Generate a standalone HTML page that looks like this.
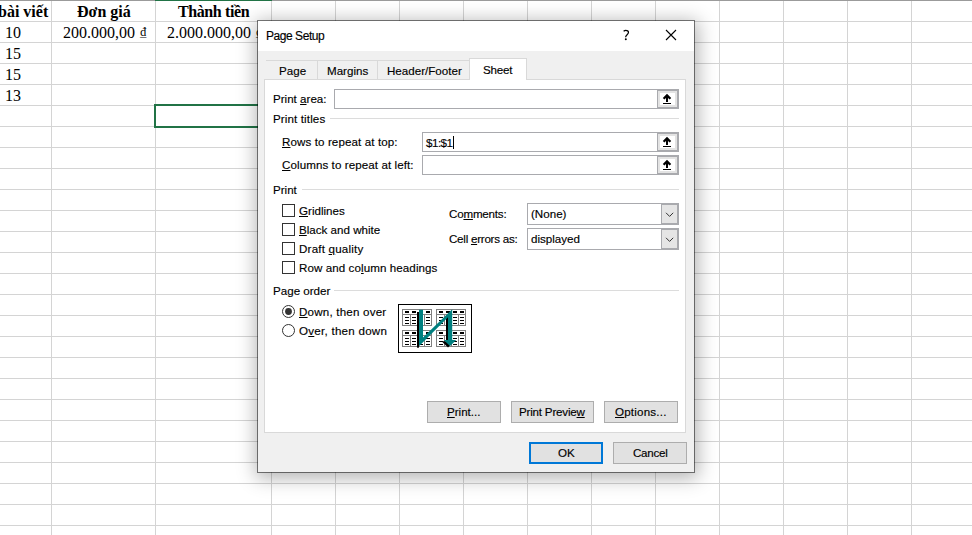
<!DOCTYPE html>
<html><head><meta charset="utf-8">
<style>
*{margin:0;padding:0;box-sizing:border-box}
html,body{width:972px;height:535px;overflow:hidden;background:#fff;position:relative}
.a{position:absolute}
.hl{position:absolute;left:0;width:972px;height:1px;background:#d4d4d4}
.vl{position:absolute;top:0;height:535px;width:1px;background:#d4d4d4}
.xs{font-family:"Liberation Serif",serif;font-size:16px;color:#000;position:absolute;white-space:nowrap;line-height:16px}
.xb{font-weight:bold}
#dlg{position:absolute;left:257px;top:20px;width:438px;height:453px;background:#f0f0f0;background-clip:padding-box;border:1px solid rgba(0,0,0,.5);box-shadow:1px 3px 18px 2px rgba(0,0,0,.30)}
.t{position:absolute;font-family:"Liberation Sans",sans-serif;font-size:11.6px;line-height:12px;color:#000;white-space:nowrap;-webkit-text-stroke:0.15px #000}
.u{text-decoration:underline;text-underline-offset:1px}
.sep{position:absolute;height:1px;background:#dcdcdc}
.box{position:absolute;background:#fff;border:1px solid #a9aaae}
.btn{position:absolute;background:#e1e1e1;border:1px solid #adadad}
.cb{position:absolute;width:13px;height:13px;border:1px solid #333;background:#fff}
</style></head><body>
<!-- grid -->
<div class="a" style="left:0;top:0;width:972px;height:1px;background:#9b9b9b"></div>
<div class="a" style="left:155px;top:0;width:117px;height:1px;background:#217346"></div>
<div class="hl" style="top:21px"></div><div class="hl" style="top:42px"></div><div class="hl" style="top:63px"></div>
<div class="hl" style="top:84px"></div><div class="hl" style="top:105px"></div><div class="hl" style="top:126px"></div>
<div class="hl" style="top:147px"></div><div class="hl" style="top:168px"></div><div class="hl" style="top:189px"></div>
<div class="hl" style="top:210px"></div><div class="hl" style="top:231px"></div><div class="hl" style="top:252px"></div>
<div class="hl" style="top:273px"></div><div class="hl" style="top:294px"></div><div class="hl" style="top:315px"></div>
<div class="hl" style="top:336px"></div><div class="hl" style="top:357px"></div><div class="hl" style="top:378px"></div>
<div class="hl" style="top:399px"></div><div class="hl" style="top:420px"></div><div class="hl" style="top:441px"></div>
<div class="hl" style="top:462px"></div><div class="hl" style="top:483px"></div><div class="hl" style="top:504px"></div>
<div class="hl" style="top:525px"></div>
<div class="vl" style="left:51px;top:1px"></div><div class="vl" style="left:155px;top:1px"></div><div class="vl" style="left:271px;top:1px"></div>
<div class="vl" style="left:335px;top:1px"></div><div class="vl" style="left:399px;top:1px"></div><div class="vl" style="left:463px;top:1px"></div>
<div class="vl" style="left:527px;top:1px"></div><div class="vl" style="left:591px;top:1px"></div><div class="vl" style="left:655px;top:1px"></div>
<div class="vl" style="left:719px;top:1px"></div><div class="vl" style="left:783px;top:1px"></div><div class="vl" style="left:847px;top:1px"></div>
<div class="vl" style="left:911px;top:1px"></div>
<!-- cell text -->
<div class="xs xb" style="left:-2px;top:4px">bài viết</div>
<div class="xs xb" style="left:77px;top:4px">Đơn giá</div>
<div class="xs xb" style="left:178px;top:4px;letter-spacing:-0.4px">Thành tiền</div>
<div class="xs" style="left:5px;top:25px">10</div>
<div class="xs" style="left:63px;top:25px">200.000,00 <span style="font-size:12.5px;position:relative;top:-2px;margin-left:1px">₫</span></div>
<div class="xs" style="left:167px;top:25px">2.000.000,00 <span style="font-size:12.5px;position:relative;top:-2px;margin-left:1px">₫</span></div>
<div class="xs" style="left:5px;top:46px">15</div>
<div class="xs" style="left:5px;top:67px">15</div>
<div class="xs" style="left:5px;top:88px">13</div>
<div class="a" style="left:154px;top:104px;width:120px;height:24px;border:2px solid #217346"></div>

<!-- dialog -->

<div id="dlg"></div>
<div class="a" style="left:258px;top:21px;width:436px;height:30px;background:#fff"></div>
<div class="t" style="left:266px;top:30px;font-size:12px;letter-spacing:-0.45px">Page Setup</div>
<svg class="a" style="left:618px;top:26px" width="16" height="16"><path d="M5.6 5.3C6.6 4.4 8.6 4.2 9.7 4.9C10.9 5.7 10.6 7.3 9.3 8.4C8.2 9.3 7.6 9.9 7.6 11.3" fill="none" stroke="#000" stroke-width="1.25"/><circle cx="7.8" cy="13.3" r="1" fill="#000"/></svg>
<svg class="a" style="left:665px;top:29px" width="12" height="12"><path d="M1 1L11 11M11 1L1 11" stroke="#000" stroke-width="1.1"/></svg>

<!-- tabs -->
<div class="a" style="left:266px;top:60px;width:204px;height:20px;border-top:1px solid #d9d9d9;background:#f0f0f0"></div>
<div class="a" style="left:317px;top:60px;width:1px;height:19px;background:#d9d9d9"></div>
<div class="a" style="left:377px;top:60px;width:1px;height:19px;background:#d9d9d9"></div>
<div class="a" style="left:264px;top:79px;width:422px;height:354px;background:#fff;border:1px solid #d9d9d9"></div>
<div class="a" style="left:469px;top:58px;width:58px;height:22px;background:#fff;border:1px solid #d9d9d9;border-bottom:none"></div>
<div class="t" style="left:279px;top:65px">Page</div>
<div class="t" style="left:327px;top:65px">Margins</div>
<div class="t" style="left:387px;top:65px">Header/Footer</div>
<div class="t" style="left:483px;top:64px;letter-spacing:-0.2px">Sheet</div>

<!-- print area -->
<div class="t" style="left:273px;top:93px">Print <span class="u">a</span>rea:</div>
<div class="box" style="left:334px;top:89px;width:345px;height:20px"></div>
<div class="t" style="left:273px;top:113px;letter-spacing:0.12px">Print titles</div>
<div class="sep" style="left:330px;top:118px;width:349px"></div>
<div class="t" style="left:282px;top:136px;letter-spacing:0.1px"><span class="u">R</span>ows to repeat at top:</div>
<div class="box" style="left:422px;top:132px;width:257px;height:20px"></div>
<div class="t" style="left:426px;top:137px;letter-spacing:-0.5px">$1:$1</div><div class="a" style="left:453px;top:136px;width:1px;height:13px;background:#000"></div>
<div class="t" style="left:282px;top:159px;letter-spacing:0.08px"><span class="u">C</span>olumns to repeat at left:</div>
<div class="box" style="left:422px;top:155px;width:257px;height:20px"></div>

<div class="a" style="left:657px;top:89px;width:22px;height:20px;border:2px solid #a9aaae;border-left-width:1px;background:#fff"><div class="a" style="left:0;top:0;width:19px;height:16px;border:2px solid #e3e3e3"></div>
<svg class="a" style="left:0;top:0" width="18" height="16"><path d="M9 2.8L13.2 7L11.6 8.6L10 7L10 10.9L8 10.9L8 7L6.4 8.6L4.8 7Z" fill="#000"/><rect x="5" y="12" width="8" height="1" fill="#000"/></svg></div>
<div class="a" style="left:657px;top:132px;width:22px;height:20px;border:2px solid #a9aaae;border-left-width:1px;background:#fff"><div class="a" style="left:0;top:0;width:19px;height:16px;border:2px solid #e3e3e3"></div>
<svg class="a" style="left:0;top:0" width="18" height="16"><path d="M9 2.8L13.2 7L11.6 8.6L10 7L10 10.9L8 10.9L8 7L6.4 8.6L4.8 7Z" fill="#000"/><rect x="5" y="12" width="8" height="1" fill="#000"/></svg></div>
<div class="a" style="left:657px;top:155px;width:22px;height:20px;border:2px solid #a9aaae;border-left-width:1px;background:#fff"><div class="a" style="left:0;top:0;width:19px;height:16px;border:2px solid #e3e3e3"></div>
<svg class="a" style="left:0;top:0" width="18" height="16"><path d="M9 2.8L13.2 7L11.6 8.6L10 7L10 10.9L8 10.9L8 7L6.4 8.6L4.8 7Z" fill="#000"/><rect x="5" y="12" width="8" height="1" fill="#000"/></svg></div>
<!-- print group -->
<div class="t" style="left:273px;top:184px">Print</div>
<div class="sep" style="left:302px;top:189px;width:377px"></div>
<div class="cb" style="left:282px;top:204px"></div>
<div class="cb" style="left:282px;top:223px"></div>
<div class="cb" style="left:282px;top:242px"></div>
<div class="cb" style="left:282px;top:261px"></div>
<div class="t" style="left:299px;top:205px"><span class="u">G</span>ridlines</div>
<div class="t" style="left:299px;top:224px"><span class="u">B</span>lack and white</div>
<div class="t" style="left:299px;top:243px;letter-spacing:0.2px">Draft <span class="u">q</span>uality</div>
<div class="t" style="left:299px;top:262px;letter-spacing:0.08px">Row and co<span class="u">l</span>umn headings</div>
<div class="t" style="left:449px;top:208px;letter-spacing:-0.2px">Co<span class="u">m</span>ments:</div>
<div class="t" style="left:449px;top:233px;letter-spacing:-0.25px">Cell <span class="u">e</span>rrors as:</div>
<div class="box" style="left:527px;top:203px;width:152px;height:22px"></div>
<div class="t" style="left:531px;top:208px">(None)</div>
<div class="box" style="left:527px;top:228px;width:152px;height:22px"></div>
<div class="t" style="left:531px;top:233px">displayed</div>

<div class="a" style="left:661px;top:203px;width:18px;height:22px;border:2px solid #a9aaae;border-left-width:1px;background:#e5e5e5">
<svg class="a" style="left:3px;top:7px" width="10" height="6"><path d="M1 0.8L4.6 4.4L8.2 0.8" fill="none" stroke="#333" stroke-width="1"/></svg></div>
<div class="a" style="left:661px;top:228px;width:18px;height:22px;border:2px solid #a9aaae;border-left-width:1px;background:#e5e5e5">
<svg class="a" style="left:3px;top:7px" width="10" height="6"><path d="M1 0.8L4.6 4.4L8.2 0.8" fill="none" stroke="#333" stroke-width="1"/></svg></div>
<!-- page order -->
<div class="t" style="left:273px;top:285px">Page order</div>
<div class="sep" style="left:334px;top:290px;width:345px"></div>
<div class="t" style="left:299px;top:306px;letter-spacing:0.2px"><span class="u">D</span>own, then over</div>
<div class="t" style="left:299px;top:325px;letter-spacing:0.25px">O<span class="u">v</span>er, then down</div>

<svg class="a" style="left:282px;top:304px" width="14" height="34">
<circle cx="6.5" cy="7.5" r="6" fill="#fff" stroke="#333" stroke-width="1"/>
<circle cx="6.5" cy="7.5" r="3.4" fill="#333"/>
<circle cx="6.5" cy="26.5" r="6" fill="#fff" stroke="#333" stroke-width="1"/>
</svg>
<svg class="a" style="left:398px;top:304px" width="75" height="50" shape-rendering="crispEdges">
<rect x="0.5" y="0.5" width="73" height="48" fill="#fff" stroke="#000" stroke-width="1"/>
<rect x="4.5" y="5.5" width="29" height="16" fill="#fff" stroke="#808080" stroke-width="1"/>
<rect x="4" y="10" width="30" height="1" fill="#808080"/>
<rect x="12" y="10" width="1" height="12" fill="#808080"/>
<rect x="19" y="10" width="1" height="12" fill="#808080"/>
<rect x="26" y="10" width="1" height="12" fill="#808080"/>
<rect x="7" y="7" width="4" height="2" fill="#000"/>
<rect x="7" y="13" width="4" height="1" fill="#000"/>
<rect x="7" y="16" width="4" height="1" fill="#000"/>
<rect x="7" y="19" width="4" height="1" fill="#000"/>
<rect x="14" y="7" width="4" height="2" fill="#000"/>
<rect x="14" y="13" width="4" height="1" fill="#000"/>
<rect x="14" y="16" width="4" height="1" fill="#000"/>
<rect x="14" y="19" width="4" height="1" fill="#000"/>
<rect x="21" y="7" width="4" height="2" fill="#000"/>
<rect x="21" y="13" width="4" height="1" fill="#000"/>
<rect x="21" y="16" width="4" height="1" fill="#000"/>
<rect x="21" y="19" width="4" height="1" fill="#000"/>
<rect x="28" y="7" width="4" height="2" fill="#000"/>
<rect x="28" y="13" width="4" height="1" fill="#000"/>
<rect x="28" y="16" width="4" height="1" fill="#000"/>
<rect x="28" y="19" width="4" height="1" fill="#000"/>
<rect x="38.5" y="5.5" width="29" height="16" fill="#fff" stroke="#808080" stroke-width="1"/>
<rect x="38" y="10" width="30" height="1" fill="#808080"/>
<rect x="46" y="10" width="1" height="12" fill="#808080"/>
<rect x="53" y="10" width="1" height="12" fill="#808080"/>
<rect x="60" y="10" width="1" height="12" fill="#808080"/>
<rect x="41" y="7" width="4" height="2" fill="#000"/>
<rect x="41" y="13" width="4" height="1" fill="#000"/>
<rect x="41" y="16" width="4" height="1" fill="#000"/>
<rect x="41" y="19" width="4" height="1" fill="#000"/>
<rect x="48" y="7" width="4" height="2" fill="#000"/>
<rect x="48" y="13" width="4" height="1" fill="#000"/>
<rect x="48" y="16" width="4" height="1" fill="#000"/>
<rect x="48" y="19" width="4" height="1" fill="#000"/>
<rect x="55" y="7" width="4" height="2" fill="#000"/>
<rect x="55" y="13" width="4" height="1" fill="#000"/>
<rect x="55" y="16" width="4" height="1" fill="#000"/>
<rect x="55" y="19" width="4" height="1" fill="#000"/>
<rect x="62" y="7" width="4" height="2" fill="#000"/>
<rect x="62" y="13" width="4" height="1" fill="#000"/>
<rect x="62" y="16" width="4" height="1" fill="#000"/>
<rect x="62" y="19" width="4" height="1" fill="#000"/>
<rect x="4.5" y="26.5" width="29" height="16" fill="#fff" stroke="#808080" stroke-width="1"/>
<rect x="4" y="31" width="30" height="1" fill="#808080"/>
<rect x="12" y="31" width="1" height="12" fill="#808080"/>
<rect x="19" y="31" width="1" height="12" fill="#808080"/>
<rect x="26" y="31" width="1" height="12" fill="#808080"/>
<rect x="7" y="28" width="4" height="2" fill="#000"/>
<rect x="7" y="34" width="4" height="1" fill="#000"/>
<rect x="7" y="37" width="4" height="1" fill="#000"/>
<rect x="7" y="40" width="4" height="1" fill="#000"/>
<rect x="14" y="28" width="4" height="2" fill="#000"/>
<rect x="14" y="34" width="4" height="1" fill="#000"/>
<rect x="14" y="37" width="4" height="1" fill="#000"/>
<rect x="14" y="40" width="4" height="1" fill="#000"/>
<rect x="21" y="28" width="4" height="2" fill="#000"/>
<rect x="21" y="34" width="4" height="1" fill="#000"/>
<rect x="21" y="37" width="4" height="1" fill="#000"/>
<rect x="21" y="40" width="4" height="1" fill="#000"/>
<rect x="28" y="28" width="4" height="2" fill="#000"/>
<rect x="28" y="34" width="4" height="1" fill="#000"/>
<rect x="28" y="37" width="4" height="1" fill="#000"/>
<rect x="28" y="40" width="4" height="1" fill="#000"/>
<rect x="38.5" y="26.5" width="29" height="16" fill="#fff" stroke="#808080" stroke-width="1"/>
<rect x="38" y="31" width="30" height="1" fill="#808080"/>
<rect x="46" y="31" width="1" height="12" fill="#808080"/>
<rect x="53" y="31" width="1" height="12" fill="#808080"/>
<rect x="60" y="31" width="1" height="12" fill="#808080"/>
<rect x="41" y="28" width="4" height="2" fill="#000"/>
<rect x="41" y="34" width="4" height="1" fill="#000"/>
<rect x="41" y="37" width="4" height="1" fill="#000"/>
<rect x="41" y="40" width="4" height="1" fill="#000"/>
<rect x="48" y="28" width="4" height="2" fill="#000"/>
<rect x="48" y="34" width="4" height="1" fill="#000"/>
<rect x="48" y="37" width="4" height="1" fill="#000"/>
<rect x="48" y="40" width="4" height="1" fill="#000"/>
<rect x="55" y="28" width="4" height="2" fill="#000"/>
<rect x="55" y="34" width="4" height="1" fill="#000"/>
<rect x="55" y="37" width="4" height="1" fill="#000"/>
<rect x="55" y="40" width="4" height="1" fill="#000"/>
<rect x="62" y="28" width="4" height="2" fill="#000"/>
<rect x="62" y="34" width="4" height="1" fill="#000"/>
<rect x="62" y="37" width="4" height="1" fill="#000"/>
<rect x="62" y="40" width="4" height="1" fill="#000"/>
<g shape-rendering="auto">
<rect x="19" y="8" width="2" height="35.7" fill="#000"/>
<rect x="48" y="14" width="2" height="23" fill="#000"/>
<path d="M43.6 37.2L56 37.2L50 43.6Z" fill="#000"/>
<path d="M21 5.7L25 5.7L25 33.4L54.2 5.3L54.2 36L58.2 36L52 42L45.8 36L50 36L50 13.2L21.2 42L21 42Z" fill="#008080"/>
</g></svg>
<!-- buttons -->
<div class="btn" style="left:427px;top:401px;width:74px;height:22px"></div>
<div class="t" style="left:447px;top:406px"><span class="u">P</span>rint...</div>
<div class="btn" style="left:511px;top:401px;width:83px;height:22px"></div>
<div class="t" style="left:519px;top:406px;letter-spacing:-0.2px">Print Previe<span class="u">w</span></div>
<div class="btn" style="left:604px;top:401px;width:74px;height:22px"></div>
<div class="t" style="left:615px;top:406px;letter-spacing:0.2px"><span class="u">O</span>ptions...</div>
<div class="btn" style="left:529px;top:442px;width:74px;height:22px;border:2px solid #0078d7"></div>
<div class="t" style="left:558px;top:447px">OK</div>
<div class="btn" style="left:613px;top:442px;width:74px;height:22px"></div>
<div class="t" style="left:633px;top:447px;letter-spacing:-0.25px">Cancel</div>

</body></html>
